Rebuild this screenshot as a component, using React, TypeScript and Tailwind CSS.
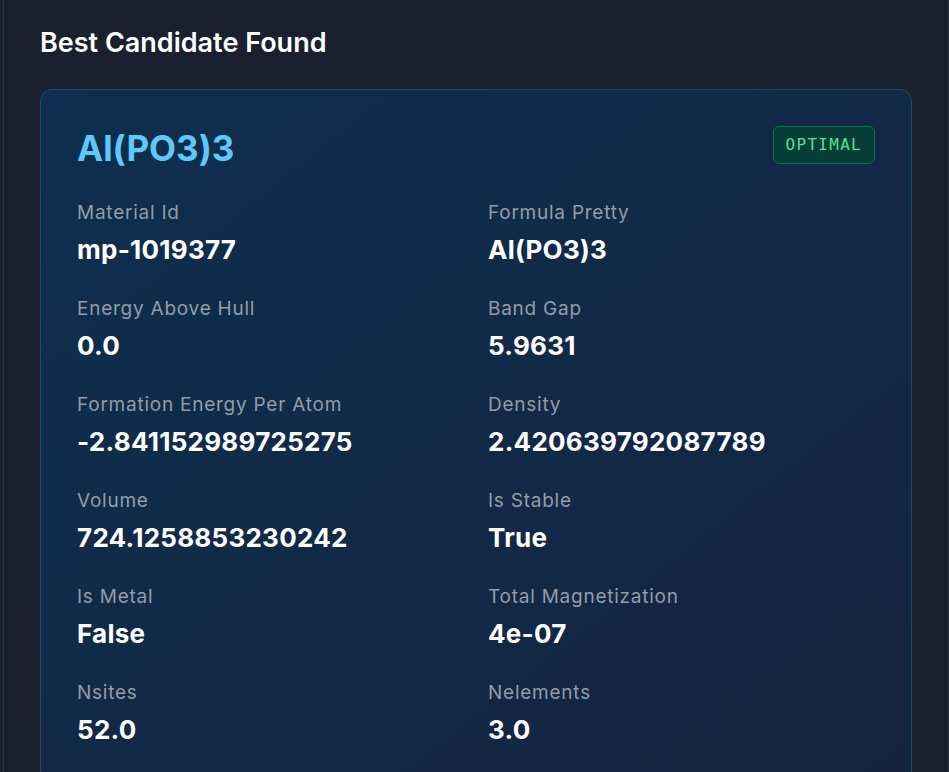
import React from "react";

const rows: [string, string][][] = [
  [["Material Id", "mp-1019377"], ["Formula Pretty", "Al(PO3)3"]],
  [["Energy Above Hull", "0.0"], ["Band Gap", "5.9631"]],
  [["Formation Energy Per Atom", "-2.841152989725275"], ["Density", "2.420639792087789"]],
  [["Volume", "724.1258853230242"], ["Is Stable", "True"]],
  [["Is Metal", "False"], ["Total Magnetization", "4e-07"]],
  [["Nsites", "52.0"], ["Nelements", "3.0"]],
];

export default function App() {
  const items = rows.flat();
  return (
    <div
      className="min-h-screen bg-[#1a202e]"
      style={{ fontFamily: "Inter, 'Noto Sans', sans-serif" }}
    >
      <div className="ml-[3px] min-h-screen border-x border-[#2a3345] bg-[#1a202e] px-9 pt-[27px] pb-9">
        <h2 className="mb-[30px] text-[27px] leading-8 font-semibold text-white">
          Best Candidate Found
        </h2>
        <div className="rounded-xl border border-[#1d4b70] bg-linear-to-br from-[#0e2f4f] to-[#142440] p-9">
          <div className="mb-[31px] flex items-start justify-between">
            <div className="mt-[2px] text-[35px] leading-10 font-bold text-[#5ec8fa]">Al(PO3)3</div>
            <div
              className="rounded-md border border-[#11704f] bg-[#073d37] px-3 py-1.5 text-base leading-6 tracking-[0.08em] text-[#4ee39b]"
              style={{ fontFamily: "'DejaVu Sans Mono', monospace" }}
            >
              OPTIMAL
            </div>
          </div>
          <div className="grid grid-cols-2 gap-x-6 gap-y-[29px]">
            {items.map(([label, value]) => (
              <div key={label} className="flex flex-col gap-[7px]">
                <div className="text-[19px] leading-7 tracking-[0.04em] text-[#929cab]">{label}</div>
                <div className="text-[26px] leading-8 tracking-[0.01em] font-bold text-white">{value}</div>
              </div>
            ))}
          </div>
        </div>
      </div>
    </div>
  );
}
